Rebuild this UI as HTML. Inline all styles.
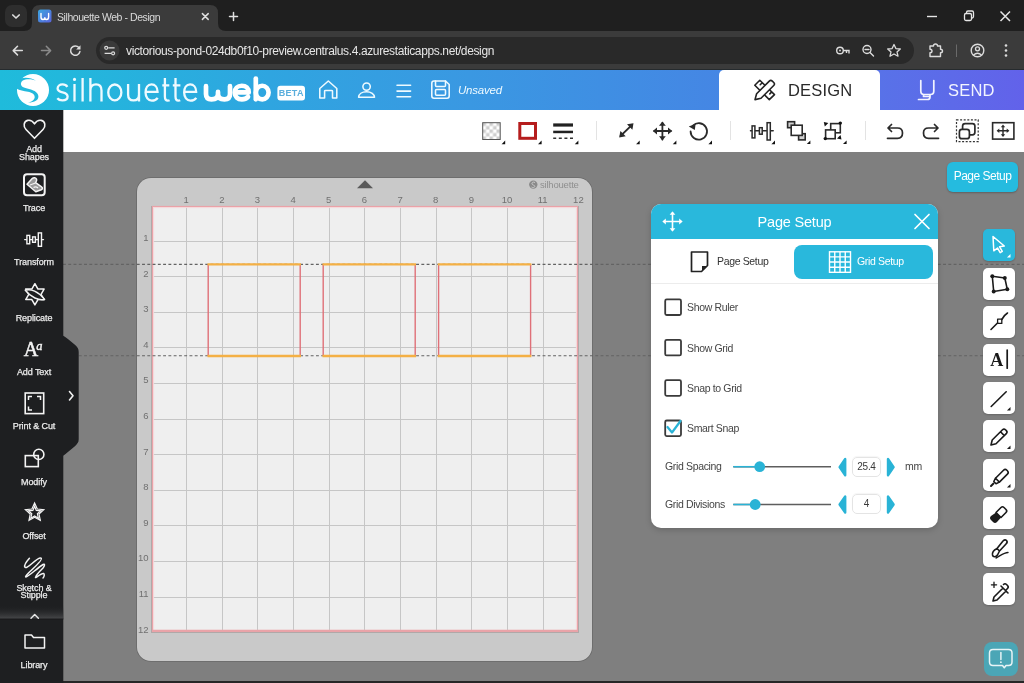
<!DOCTYPE html>
<html><head><meta charset="utf-8">
<style>
*{box-sizing:border-box;margin:0;padding:0}
html,body{width:1024px;height:683px;overflow:hidden;background:#7f7f7f;font-family:"Liberation Sans",sans-serif}
.a{position:absolute;will-change:transform}
svg{position:absolute;overflow:visible;will-change:transform}
#tabs{left:0;top:0;width:1024px;height:32px;background:#1f1f1f}
#addr{left:0;top:31px;width:1024px;height:39px;background:#3b3b3b}
#hdr{left:0;top:70px;width:1024px;height:40px;background:linear-gradient(90deg,#1fbbdb 0px,#22b8dc 60px,#2fa5e0 270px,#3a98e2 470px,#3f8fe3 600px,#4586e4 720px,#5872e8 880px,#6262ea 1024px)}
#tbar{left:63px;top:110px;width:961px;height:42px;background:#fff}
.sl{z-index:6;left:0;width:68px;text-align:center;font-size:9px;line-height:10px;color:#ececec;white-space:nowrap;letter-spacing:-0.1px;-webkit-text-stroke:0.25px #ececec;will-change:transform}
#mat{left:137px;top:177.5px;width:455px;height:483px;background:#c9c9c9;border-radius:14px;box-shadow:0 0 0 0.8px rgba(0,0,0,0.18)}
#grid{left:152px;top:206px;width:426px;height:426px;background:#efefef}
#dlg{left:651px;top:204px;width:287px;height:324px;background:#fff;border-radius:10px;overflow:hidden;box-shadow:0 2px 6px rgba(0,0,0,0.18)}
.ttl{left:57px;top:10.9px;font-size:10.5px;color:#dadada;white-space:nowrap;letter-spacing:-0.43px}
.url{left:125.5px;top:43.5px;font-size:12px;color:#e6e6e6;white-space:nowrap;letter-spacing:-0.374px}
.dl{left:36px;font-size:10.5px;color:#454545;letter-spacing:-0.35px;white-space:nowrap}
.tb{left:983px;width:32px;height:32px;background:#fff;border-radius:5px;box-shadow:0 1px 2px rgba(0,0,0,0.2)}
.tb.on{background:#29b8dc}
</style></head><body>
<!-- browser chrome -->
<div id="tabs" class="a"></div>
<div id="addr" class="a"></div>
<div class="a" style="left:0;top:68.6px;width:1024px;height:1.4px;background:#262b2e"></div>
<div class="a" style="left:5px;top:5px;width:22px;height:22px;border-radius:7px;background:#2e2e2e"></div>
<svg style="left:0;top:0" width="1024" height="69">
  <path d="M12.8 15 L16 18 L19.2 15" fill="none" stroke="#ddd" stroke-width="1.7" stroke-linecap="round" stroke-linejoin="round"/>
  <!-- active tab -->
  <path d="M24 31 Q32 31 32 23 L32 13 Q32 5 40 5 L210 5 Q218 5 218 13 L218 23 Q218 31 226 31 Z" fill="#3b3b3b"/>
  <!-- tab close -->
  <path d="M202.4 13.6 L208.2 19.4 M208.2 13.6 L202.4 19.4" stroke="#dedede" stroke-width="1.5" stroke-linecap="round"/>
  <!-- plus -->
  <path d="M233.5 12.5 V20.5 M229.5 16.5 H237.5" stroke="#e0e0e0" stroke-width="1.5" stroke-linecap="round"/>
  <!-- window controls -->
  <path d="M927 16.5 H937" stroke="#e6e6e6" stroke-width="1.4"/>
  <rect x="964.5" y="13.5" width="7" height="7" rx="1.5" fill="none" stroke="#e6e6e6" stroke-width="1.3"/>
  <path d="M966.5 13.5 V12.5 Q966.5 11 968 11 H972 Q973.5 11 973.5 12.5 V16.5 Q973.5 18 972 18" fill="none" stroke="#e6e6e6" stroke-width="1.3"/>
  <path d="M1000.5 11.5 L1010 21 M1010 11.5 L1000.5 21" stroke="#e6e6e6" stroke-width="1.5"/>
  <!-- nav -->
  <path d="M22.3 50.6 H13.3 M17.5 46.3 L13.2 50.6 L17.5 54.9" fill="none" stroke="#dcdcdc" stroke-width="1.5" stroke-linecap="round" stroke-linejoin="round"/>
  <path d="M41.5 50.6 H50.5 M46.3 46.3 L50.6 50.6 L46.3 54.9" fill="none" stroke="#8a8a8a" stroke-width="1.5" stroke-linecap="round" stroke-linejoin="round"/>
  <path d="M78.9 47.6 A4.7 4.7 0 1 0 79.9 51.6" fill="none" stroke="#dcdcdc" stroke-width="1.5" stroke-linecap="round"/>
  <path d="M80.5 45.2 V49.6 H76.1 Z" fill="#dcdcdc"/>
  <!-- omnibox -->
  <rect x="96" y="37" width="818" height="27" rx="13.5" fill="#292929"/>
  <circle cx="109.5" cy="50.5" r="10" fill="#3a3a3a"/>
  <path d="M108.3 47.8 H114.6 M104.6 53.3 H111" stroke="#dcdcdc" stroke-width="1.3"/>
  <circle cx="106.2" cy="47.8" r="1.5" fill="none" stroke="#dcdcdc" stroke-width="1.2"/>
  <circle cx="113.1" cy="53.3" r="1.5" fill="none" stroke="#dcdcdc" stroke-width="1.2"/>
  <!-- key -->
  <circle cx="840" cy="50.5" r="3.3" fill="none" stroke="#dcdcdc" stroke-width="1.4"/>
  <circle cx="840" cy="50.5" r="0.9" fill="#dcdcdc"/>
  <path d="M843.3 50.5 H849 V53.5 M846.5 50.5 V53" fill="none" stroke="#dcdcdc" stroke-width="1.4"/>
  <!-- zoom -->
  <circle cx="867" cy="49.5" r="4" fill="none" stroke="#dcdcdc" stroke-width="1.4"/>
  <path d="M865 49.5 H869 M870 52.5 L873.5 56" stroke="#dcdcdc" stroke-width="1.4" stroke-linecap="round"/>
  <!-- star -->
  <path d="M894 44.5 L895.9 48.6 L900.3 49 L897 51.9 L898 56.2 L894 54 L890 56.2 L891 51.9 L887.7 49 L892.1 48.6 Z" fill="none" stroke="#dcdcdc" stroke-width="1.3" stroke-linejoin="round"/>
  <!-- extension -->
  <path d="M930 46 H933.5 Q933.5 44 935.5 44 Q937.5 44 937.5 46 H940.5 V49.2 Q942.5 49.2 942.5 51 Q942.5 52.8 940.5 52.8 V56.5 H930 V52.8 Q932 52.8 932 51 Q932 49.2 930 49.2 Z" fill="none" stroke="#dcdcdc" stroke-width="1.4" stroke-linejoin="round"/>
  <path d="M956.5 44.5 V57" stroke="#6a6a6a" stroke-width="1"/>
  <!-- profile -->
  <circle cx="977.5" cy="50.5" r="6.3" fill="none" stroke="#dcdcdc" stroke-width="1.4"/>
  <circle cx="977.5" cy="48.8" r="2" fill="none" stroke="#dcdcdc" stroke-width="1.3"/>
  <path d="M973.5 55 Q977.5 51.5 981.5 55" fill="none" stroke="#dcdcdc" stroke-width="1.3"/>
  <circle cx="1006" cy="45.5" r="1.3" fill="#dcdcdc"/><circle cx="1006" cy="50.5" r="1.3" fill="#dcdcdc"/><circle cx="1006" cy="55.5" r="1.3" fill="#dcdcdc"/>
  <!-- favicon -->
  <defs><linearGradient id="fav" x1="0" y1="0" x2="1" y2="1"><stop offset="0" stop-color="#3aa6df"/><stop offset="1" stop-color="#5b63dc"/></linearGradient></defs>
  <rect x="38" y="9.5" width="13.5" height="13" rx="2.5" fill="url(#fav)"/>
  <path d="M41 13.5 V17 Q41 19.5 43 19.5 Q44.8 19.5 44.8 17.3 Q44.8 19.5 46.6 19.5 Q48.6 19.5 48.6 17 V13.5" fill="none" stroke="#fff" stroke-width="1.4" stroke-linecap="round"/>
</svg>
<div class="a ttl">Silhouette Web - Design</div>
<div class="a url">victorious-pond-024db0f10-preview.centralus.4.azurestaticapps.net/design</div>

<div id="hdr" class="a"></div>
<svg style="left:0;top:0" width="1024" height="110">
  <circle cx="33" cy="90" r="16" fill="#fff"/>
  <path fill="#22b9dc" d="M36.2 80.9 C33 79 26 78.6 22.8 80.6 C20.6 82 20.5 84.5 21.6 86 C22.6 87.3 26 88.1 30 89.2 C34.5 90.5 38.4 92.6 38.4 96.6 C38.4 100.2 35 102.4 28 102.9 C32 101.6 34.7 99.6 34.7 97 C34.7 94.1 31.6 92.6 28 91.8 C24 90.9 19 90.2 16.9 88.7 L16.3 86 L17.5 81.5 L21 78.2 C26 77 32 77.8 36.2 80.9 Z"/>
  <g fill="none" stroke="#effaff" stroke-width="2.3" stroke-linecap="butt">
    <path d="M67.4 86.8 C66.3 85.2 64.6 84.45 62.6 84.45 C59.6 84.45 57.6 86.2 57.6 88.5 C57.6 91 59.8 91.7 62.6 92.3 C65.6 93 67.6 94 67.6 96.6 C67.6 99 65.4 100.45 62.4 100.45 C60.2 100.45 58.4 99.6 57.3 98.2"/>
    <path d="M74.5 84 V101.6 M82.6 78 V101.6 M90.4 78 V101.6 M90.4 90.5 C90.4 86.5 92.8 84.45 96 84.45 C99.4 84.45 101.5 86.8 101.5 90.5 V101.6"/>
    <ellipse cx="114.8" cy="92.45" rx="6.55" ry="7.95"/>
    <path d="M128.1 84 V94.5 C128.1 98.5 130.3 100.45 133.5 100.45 C136.8 100.45 139 98.5 139 94.5 M139 84 V101.6"/>
    <path d="M145.55 91.8 H157.55 C157.55 87.2 155 84.45 151.55 84.45 C147.8 84.45 145.55 87.8 145.55 92.5 C145.55 97.3 148.2 100.65 151.8 100.65 C154.5 100.65 156.5 99.5 157.7 97.8"/>
    <path d="M164.9 78 V96.5 C164.9 99.5 166 100.6 167.8 100.6 C168.6 100.6 169.2 100.5 169.6 100.3 M162.3 85.4 H169.3"/>
    <path d="M175.5 78 V96.5 C175.5 99.5 176.6 100.6 178.4 100.6 C179.2 100.6 179.8 100.5 180.2 100.3 M172.8 85.4 H180.4"/>
    <path d="M184.15 91.8 H196.15 C196.15 87.2 193.6 84.45 190.15 84.45 C186.4 84.45 184.15 87.8 184.15 92.5 C184.15 97.3 186.8 100.65 190.4 100.65 C193.1 100.65 195.1 99.5 196.3 97.8"/>
  </g>
  <circle cx="74.5" cy="79.4" r="1.55" fill="#effaff"/>
  <g fill="none" stroke="#fff" stroke-width="4.7" stroke-linecap="round" stroke-linejoin="round">
    <path d="M206 86.2 V94 C206 97.5 208 99.35 211.5 99.35 C215.5 99.35 218 97.5 218 94 V91.9 M218 94 C218 97.5 220.5 99.35 224.5 99.35 C228 99.35 230 97.5 230 94 V86.2"/>
    <path d="M234.75 92.4 H248.75 C248.75 88.3 245.9 85.75 241.75 85.75 C237.6 85.75 234.75 88.6 234.75 92.55 C234.75 96.6 237.6 99.35 241.9 99.35 C244.6 99.35 246.6 98.3 248 96.8"/>
    <path d="M255.8 78.6 V99.3"/>
    <ellipse cx="262.2" cy="92.55" rx="6.4" ry="6.8"/>
  </g>
  <rect x="277.4" y="85.8" width="27.6" height="14.7" rx="3" fill="#fff"/>
  <text x="291.2" y="96.2" text-anchor="middle" font-family="Liberation Sans" font-weight="bold" font-size="9" letter-spacing="0.3" fill="#5aaedc">BETA</text>
  <g fill="none" stroke="#eefaff" stroke-width="1.55" stroke-linejoin="round" stroke-linecap="round">
    <path d="M319.8 98 V88.5 L328.3 81 L336.8 88.5 V98 H332.5 V91 Q332.5 90.5 331.5 90.5 H325.5 Q324.6 90.5 324.6 91 V98 Z"/>
    <circle cx="366.6" cy="86.6" r="3.7"/>
    <path d="M358.6 97.3 C358.6 94 362 91.8 366.6 91.8 C371 91.8 374.5 94 374.5 97.3 Z"/>
    <path d="M397 85.3 H410.6 M397 91.1 H410.6 M397 96.8 H410.6"/>
    <path d="M434 81 H445.5 L449.2 84.5 V96 Q449.2 98.2 447 98.2 H434 Q431.8 98.2 431.8 96 V83.2 Q431.8 81 434 81 Z"/>
    <path d="M435.5 81 V85.5 Q435.5 86.5 436.5 86.5 H444.5 Q445.5 86.5 445.5 85.5 V81"/>
    <rect x="435.5" y="89.5" width="10" height="5.8" rx="1"/>
  </g>
</svg>
<div class="a" style="left:458px;top:83.5px;font-size:11.5px;font-style:italic;color:#eefaff;letter-spacing:-0.2px">Unsaved</div>
<div class="a" style="left:719px;top:69.5px;width:161px;height:41px;background:#fff;border-radius:5px 5px 0 0"></div>
<div class="a" style="left:788px;top:81px;font-size:16.5px;color:#2a2a2a;letter-spacing:0.2px">DESIGN</div>
<div class="a" style="left:948px;top:81px;font-size:16.5px;color:#f2f4ff;letter-spacing:0.2px">SEND</div>
<svg style="left:0;top:0" width="1024" height="110">
  <g fill="none" stroke="#222" stroke-width="1.6" stroke-linejoin="round" stroke-linecap="round">
    <path d="M754.8 85.3 L759.8 80.3 L774.5 94.6 L769.3 99.6 Z M762.2 82.7 L760.2 84.7 M771.8 91.9 L769.8 93.9" fill="#fff"/>
    <path d="M755 99.6 L756.6 93.8 L769.3 81.1 Q770.8 79.6 772.3 81.1 L773.7 82.5 Q775.2 84 773.7 85.5 L761 98.2 Z" fill="#fff"/>
  </g>
  <g fill="none" stroke="#f2f4ff" stroke-width="1.7" stroke-linecap="round" stroke-linejoin="round">
    <path d="M920.8 80.5 V91 Q920.8 94.5 924 94.5 H930.5 Q933.8 94.5 933.8 91 V80.5 M923.5 94.5 V96.5 H930 M930 94.5 V97 Q930 99.5 927.5 99.5 H918.5"/>
  </g>
</svg>
<div id="tbar" class="a"></div>
<svg style="left:0;top:0" width="1024" height="152">
  <defs>
    <pattern id="chk" x="482.5" y="122.5" width="7" height="7" patternUnits="userSpaceOnUse">
      <rect width="7" height="7" fill="#fff"/><rect width="3.5" height="3.5" fill="#cfcfcf"/><rect x="3.5" y="3.5" width="3.5" height="3.5" fill="#cfcfcf"/>
    </pattern>
  </defs>
  <rect x="482.7" y="122.7" width="17.5" height="16.8" fill="url(#chk)" stroke="#555" stroke-width="1"/>
  <rect x="519.8" y="123.5" width="15.7" height="14.8" fill="#fff" stroke="#b51d1d" stroke-width="3"/>
  <rect x="553.2" y="123.4" width="19.8" height="3.2" fill="#222"/>
  <rect x="553.2" y="130.7" width="19.8" height="2.5" fill="#222"/>
  <path d="M553.2 138.3 H573" stroke="#333" stroke-width="1.5" stroke-dasharray="3 2.6"/>
  <g fill="#111">
    <path d="M505.2 140.6 V144.2 H501.6 Z"/><path d="M541.6 140.6 V144.2 H538 Z"/><path d="M578.4 140.6 V144.2 H574.8 Z"/>
    <path d="M639.7 140.6 V144.2 H636.1 Z"/><path d="M676.4 140.6 V144.2 H672.8 Z"/><path d="M712 140.6 V144.2 H708.4 Z"/>
    <path d="M775 140.6 V144.2 H771.4 Z"/><path d="M810.4 140.4 V144 H806.8 Z"/><path d="M846.6 140.4 V144 H843 Z"/>
  </g>
  <g stroke="#e3e3e3" stroke-width="1"><path d="M596.5 121 V140"/><path d="M730.5 121 V140"/><path d="M865.5 121 V140"/></g>
  <g fill="none" stroke="#2a2a2a" stroke-width="1.8" stroke-linecap="round" stroke-linejoin="round">
    <path d="M620.5 136 L632 124.8"/>
    <path d="M662.4 123 V139.5 M654.3 131 H670.8"/>
    <path d="M693 125.6 A8.2 8.2 0 1 1 690.6 131.5"/>
    <path d="M750.5 130.7 H751.4 M755.4 130.7 H758.7 M762.7 130.7 H766.4 M770.8 130.7 H773.2" stroke-width="1.5"/>
  </g>
  <g fill="#2a2a2a">
    <path d="M633.5 123.2 L627 124.3 L632.4 129.7 Z"/><path d="M619.2 137.4 L620.4 130.9 L625.7 136.3 Z"/>
    <path d="M662.4 121.5 L659 125.8 H665.8 Z"/><path d="M662.4 140.6 L659 136.3 H665.8 Z"/>
    <path d="M652.8 131 L657 127.6 V134.4 Z"/><path d="M672.3 131 L668 127.6 V134.4 Z"/>
    <path d="M688.8 126.4 L695.6 123.7 L694.8 130 Z"/>
  </g>
  <g fill="#fff" stroke="#2a2a2a" stroke-width="1.5">
    <rect x="752.1" y="125.9" width="2.8" height="12"/>
    <rect x="759.4" y="127.7" width="2.8" height="6.5"/>
    <rect x="767.1" y="122.7" width="3.2" height="17.3"/>
  </g>
  <g stroke="#2a2a2a" stroke-width="1.6">
    <rect x="787.6" y="121.7" width="7" height="6" fill="#cfcfcf"/>
    <rect x="798.6" y="133.7" width="6.6" height="6.2" fill="#cfcfcf"/>
    <rect x="791.2" y="125.2" width="11" height="10.2" fill="#fff"/>
  </g>
  <g stroke="#2a2a2a" stroke-width="1.6">
    <rect x="830.7" y="123.6" width="9.6" height="9.2" fill="#fff"/>
    <rect x="825.6" y="129.9" width="9.6" height="8.8" fill="#fff"/>
  </g>
  <g fill="#111"><path d="M823.8 122 L828.3 123 L824.8 126.5 Z"/><circle cx="840.3" cy="123.1" r="1.7"/><circle cx="825.3" cy="138.6" r="1.7"/><path d="M841.5 139.6 L837 138.6 L840.5 135.1 Z"/></g>
  <g fill="none" stroke="#2a2a2a" stroke-width="1.7" stroke-linecap="round" stroke-linejoin="round">
    <path d="M891.5 124.5 L888 128 L891.5 131.5 M888.5 128 H897.5 Q902.5 128 902.5 133 Q902.5 138.3 897.5 138.3 H887.5"/>
    <path d="M934.5 124.5 L938 128 L934.5 131.5 M937.5 128 H928.5 Q923.5 128 923.5 133 Q923.5 138.3 928.5 138.3 H938.5"/>
    <rect x="962.6" y="123.6" width="12.3" height="11.2" rx="2.5"/>
    <rect x="959.4" y="129.4" width="10" height="9.3" rx="2.5" fill="#fff"/>
  </g>
  <rect x="956.5" y="119.8" width="21.7" height="21.8" fill="none" stroke="#333" stroke-width="1.2" stroke-dasharray="2 1.6"/>
  <rect x="992.6" y="122.7" width="21.3" height="16.4" fill="none" stroke="#2a2a2a" stroke-width="1.6"/>
  <g fill="none" stroke="#2a2a2a" stroke-width="1.4"><path d="M1003 126 V135.5 M997.8 130.7 H1008.2"/></g>
  <g fill="#2a2a2a">
    <path d="M1003 124.6 L1000.8 127.3 H1005.2 Z"/><path d="M1003 136.9 L1000.8 134.2 H1005.2 Z"/>
    <path d="M996.6 130.7 L999.3 128.5 V132.9 Z"/><path d="M1009.4 130.7 L1006.7 128.5 V132.9 Z"/>
  </g>
</svg>
<div id="side" class="a"></div>
<svg style="left:0;top:0;z-index:5" width="90" height="683">
  <path d="M0 110 H63.3 V335.8 C66 337.5 70 340.5 74.6 344.6 C77.5 347.3 78.7 349 78.7 352 V439.3 C78.7 442.5 77.3 444 74.6 446.5 C70 450.5 66 453.5 63.3 455.7 V683 H0 Z" fill="#1e1f21"/>
  <path d="M0 605 H63.3 V619 H0 Z" fill="url(#sep)"/><path d="M0 619 H63.3" stroke="#18191b" stroke-width="1"/>
  <defs><linearGradient id="sep" x1="0" y1="0" x2="0" y2="1"><stop offset="0" stop-color="#1e1f21" stop-opacity="0"/><stop offset="1" stop-color="#48494b"/></linearGradient></defs>
  <path d="M31 618.3 L34.7 614.4 L38.4 618.3" fill="none" stroke="#e8e8e8" stroke-width="1.4" stroke-linecap="round" stroke-linejoin="round"/>
  <path d="M69.5 391.5 L73 395.7 L69.5 400" fill="none" stroke="#f0f0f0" stroke-width="1.6" stroke-linecap="round" stroke-linejoin="round"/>
  <g fill="none" stroke="#f4f4f4" stroke-width="1.6" stroke-linejoin="round" stroke-linecap="round">
    <path d="M34.5 138.3 L26 129.5 C23 126.3 23.6 121.2 27.8 120.4 C30.8 119.8 33 121.6 34.5 123.8 C36 121.6 38.2 119.8 41.2 120.4 C45.4 121.2 46 126.3 43 129.5 Z"/>
    <rect x="24" y="174.2" width="20.7" height="21" rx="3" stroke-width="2"/>
    <path d="M24.7 239.6 H43.5" stroke-width="1.4"/>
  </g>
  <path d="M27 184.3 L32.2 178.6 C33.6 177.1 36 177.4 36.6 179.2 C37 180.4 36.3 181.6 35.6 182.6 L41.6 186.8 C42.8 187.6 42.6 189.2 41.3 189.8 L35.8 191.8 Z" fill="#9a9a9a" stroke="#f4f4f4" stroke-width="1.5" stroke-linejoin="round"/>
  <path d="M30 185 L35.5 183 M33.5 187.5 C35 186.5 37 187 38 188" fill="none" stroke="#f4f4f4" stroke-width="1.2"/>
  <g fill="#1e1f21" stroke="#f4f4f4" stroke-width="1.4">
    <rect x="26.9" y="235.4" width="2.8" height="8.4"/>
    <rect x="32.6" y="236.9" width="2.8" height="5.4"/>
    <rect x="38.3" y="232.9" width="3.2" height="13.4"/>
  </g>
  <g fill="none" stroke="#f4f4f4" stroke-width="1.5" stroke-linejoin="round" stroke-linecap="round">
    <path d="M34.90 283.70 L37.96 289.00 L44.08 289.00 L41.02 294.30 L44.08 299.60 L37.96 299.60 L34.90 304.90 L31.84 299.60 L25.72 299.60 L28.78 294.30 L25.72 289.00 L31.84 289.00 Z"/>
    <path d="M25.3 290.2 C30.5 288.3 38.5 291.5 44.6 299.4 C39 300.8 30.8 297.3 25.3 290.2 Z" fill="#1e1f21"/>
  </g>
  <text x="23.8" y="356.3" font-family="Liberation Serif" font-size="20" fill="#f4f4f4" stroke="#f4f4f4" stroke-width="0.5">A</text>
  <text x="36.3" y="350" font-family="Liberation Serif" font-style="italic" font-size="12.5" fill="#f4f4f4" stroke="#f4f4f4" stroke-width="0.4">a</text>
  <g fill="none" stroke="#f4f4f4" stroke-width="1.6">
    <rect x="25.2" y="393" width="18.5" height="20.6"/>
    <path d="M28.5 400 V396.5 H32 M37 396.5 H40.5 V400 M28.5 406.5 V410 H32" stroke-width="1.5"/>
    <rect x="25.3" y="455.6" width="13" height="11"/>
    <circle cx="38.8" cy="454.4" r="5.1"/>
    <path d="M34.6 503 L37.3 509 L43.8 509.6 L39 514 L40.3 520.4 L34.6 517.2 L29 520.4 L30.2 514 L25.4 509.6 L31.9 509 Z" stroke-width="1.2"/>
    <path d="M34.6 506.2 L36.3 510.4 L40.8 510.8 L37.4 513.8 L38.4 518.2 L34.6 516 L30.8 518.2 L31.8 513.8 L28.4 510.8 L32.9 510.4 Z" stroke-width="1.2"/>
    <path d="M29.4 558.3 C27 561 24 565 24.8 567 C25.5 568.5 28 567 32 563.5 C36 560 40 557 41.3 558.3 C42.5 559.8 35 567 29 572.5 C26 575.5 25 577 26 577 C28 577 38 567.5 43 564.5 C45 563.5 45 565.5 43 568 C40 571 35.5 576.5 35.5 577.5 C35.5 578.5 41 573 43.5 573.5 C45 574 44 577 43 578" stroke-width="1.5" stroke-linecap="round" stroke-linejoin="round"/>
    <path d="M25 635 H31.5 L33.5 637.5 H44.5 V648 H25 Z" stroke-width="1.5" stroke-linejoin="round"/>
  </g>
</svg>
<div class="a sl" style="top:143.5px">Add</div>
<div class="a sl" style="top:151.5px">Shapes</div>
<div class="a sl" style="top:202.5px">Trace</div>
<div class="a sl" style="top:257px">Transform</div>
<div class="a sl" style="top:312.5px">Replicate</div>
<div class="a sl" style="top:367px">Add Text</div>
<div class="a sl" style="top:421px">Print &amp; Cut</div>
<div class="a sl" style="top:476.5px">Modify</div>
<div class="a sl" style="top:531px">Offset</div>
<div class="a sl" style="top:582.5px">Sketch &amp;</div>
<div class="a sl" style="top:590px">Stipple</div>
<div class="a sl" style="top:659.5px">Library</div>
<div id="mat" class="a"></div>
<svg style="left:0;top:0" width="1024" height="683">
  <rect x="152" y="206" width="426.5" height="426.5" fill="#efefef"/>
  <g stroke="#c6c6c6" stroke-width="1"><path d="M186.5 206 V633"/><path d="M152 241.5 H579"/><path d="M222.5 206 V633"/><path d="M152 276.5 H579"/><path d="M257.5 206 V633"/><path d="M152 312.5 H579"/><path d="M293.5 206 V633"/><path d="M152 347.5 H579"/><path d="M329.5 206 V633"/><path d="M152 383.5 H579"/><path d="M364.5 206 V633"/><path d="M152 419.5 H579"/><path d="M400.5 206 V633"/><path d="M152 454.5 H579"/><path d="M436.5 206 V633"/><path d="M152 490.5 H579"/><path d="M471.5 206 V633"/><path d="M152 525.5 H579"/><path d="M507.5 206 V633"/><path d="M152 561.5 H579"/><path d="M543.5 206 V633"/><path d="M152 597.5 H579"/><path d="M578.5 206 V633"/><path d="M152 632.5 H579"/></g>
  <rect x="152.5" y="206.5" width="425" height="425" fill="none" stroke="#eaa2a8" stroke-width="1.2"/>
  <rect x="153.6" y="207.6" width="422.8" height="422.8" fill="none" stroke="#f6d8da" stroke-width="1"/>
  <path d="M152.5 630.8 H578" stroke="#e9a3a8" stroke-width="2"/>
  <path d="M578.5 206 V633 M152 632.5 H579 M151.5 206 V633" stroke="#b0a8a8" stroke-width="1"/>
  <g font-family="Liberation Sans" font-size="9.5" fill="#707070"><text x="186.1" y="202.8" text-anchor="middle">1</text><text x="148.5" y="240.9" text-anchor="end">1</text><text x="221.8" y="202.8" text-anchor="middle">2</text><text x="148.5" y="276.5" text-anchor="end">2</text><text x="257.4" y="202.8" text-anchor="middle">3</text><text x="148.5" y="312.1" text-anchor="end">3</text><text x="293.1" y="202.8" text-anchor="middle">4</text><text x="148.5" y="347.7" text-anchor="end">4</text><text x="328.7" y="202.8" text-anchor="middle">5</text><text x="148.5" y="383.3" text-anchor="end">5</text><text x="364.4" y="202.8" text-anchor="middle">6</text><text x="148.5" y="418.9" text-anchor="end">6</text><text x="400.1" y="202.8" text-anchor="middle">7</text><text x="148.5" y="454.5" text-anchor="end">7</text><text x="435.7" y="202.8" text-anchor="middle">8</text><text x="148.5" y="490.1" text-anchor="end">8</text><text x="471.4" y="202.8" text-anchor="middle">9</text><text x="148.5" y="525.7" text-anchor="end">9</text><text x="507.0" y="202.8" text-anchor="middle">10</text><text x="148.5" y="561.3" text-anchor="end">10</text><text x="542.7" y="202.8" text-anchor="middle">11</text><text x="148.5" y="596.9" text-anchor="end">11</text><text x="578.4" y="202.8" text-anchor="middle">12</text><text x="148.5" y="632.5" text-anchor="end">12</text></g>
  <path d="M357 188.3 L365 180.3 L373 188.3 Z" fill="#5a5a5a"/>
  <circle cx="533.3" cy="184.6" r="4.2" fill="#8a8a8a"/>
  <path d="M535 182.5 C533 181.5 531.5 182.5 532 184 C532.5 185.5 535 185 534.8 186.5 C534.5 187.8 532.8 187.8 531.5 187" fill="none" stroke="#c9c9c9" stroke-width="1"/>
  <text x="540" y="187.8" font-family="Liberation Sans" font-size="9.5" fill="#8f8f8f" letter-spacing="-0.2">silhouette</text>
  <g stroke="#636363" stroke-width="1.1" stroke-dasharray="2.9 2.37">
    <path d="M63 264.4 H1024"/><path d="M63 355.8 H1024"/>
  </g>
  <g fill="none">
    <g stroke="#df7078" stroke-width="1.4">
      <path d="M208.2 264.4 V356"/><path d="M300.2 264.4 V356"/>
      <path d="M323.2 264.4 V356"/><path d="M415.2 264.4 V356"/>
      <path d="M438.6 264.4 V356"/><path d="M530.6 264.4 V356"/>
    </g>
    <g stroke="#f4b045" stroke-width="2.3">
      <path d="M207.5 264.4 H301"/><path d="M207.5 356 H301"/>
      <path d="M322.5 264.4 H416"/><path d="M322.5 356 H416"/>
      <path d="M437.8 264.4 H531.4"/><path d="M437.8 356 H531.4"/>
    </g>
  </g>
</svg>
<div id="dlg" class="a">
  <div class="a" style="left:0;top:0;width:287px;height:35px;background:#29b8dc"></div>
  <div class="a" style="left:0;top:9.5px;width:287px;text-align:center;font-size:14.5px;color:#fff;letter-spacing:-0.2px">Page Setup</div>
  <div class="a" style="left:143px;top:41px;width:139px;height:34px;background:#29b8dc;border-radius:8px"></div>
  <div class="a" style="left:65.5px;top:51px;font-size:10.5px;color:#333;letter-spacing:-0.35px">Page Setup</div>
  <div class="a" style="left:205.5px;top:51px;font-size:10.5px;color:#fff;letter-spacing:-0.35px">Grid Setup</div>
  <div class="a" style="left:0;top:79px;width:287px;height:1px;background:#ececec"></div>
  <div class="a dl" style="top:97px">Show Ruler</div>
  <div class="a dl" style="top:137.5px">Show Grid</div>
  <div class="a dl" style="top:178px">Snap to Grid</div>
  <div class="a dl" style="top:218px">Smart Snap</div>
  <div class="a dl" style="left:14px;top:256px">Grid Spacing</div>
  <div class="a dl" style="left:14px;top:293.5px">Grid Divisions</div>
  <div class="a dl" style="left:253.5px;top:256px">mm</div>
  <div class="a" style="left:201px;top:252.5px;width:29px;height:20px;border:1px solid #e4e4e4;border-radius:5px;box-shadow:0 -1px 1px rgba(0,0,0,0.04);font-size:10px;color:#3a3a3a;text-align:center;line-height:18px;letter-spacing:-0.3px">25.4</div>
  <div class="a" style="left:201px;top:290px;width:29px;height:20px;border:1px solid #e4e4e4;border-radius:5px;box-shadow:0 -1px 1px rgba(0,0,0,0.04);font-size:10px;color:#3a3a3a;text-align:center;line-height:18px">4</div>
</div>
<svg style="left:0;top:0" width="1024" height="683">
  <g fill="none" stroke="#fff" stroke-width="1.6" stroke-linecap="round">
    <path d="M672.5 212.5 V230.5 M663.5 221.5 H681.5"/>
    <path d="M915 214.5 L929 228.5 M929 214.5 L915 228.5" stroke-width="1.7"/>
  </g>
  <g fill="#fff">
    <path d="M672.5 211.5 L669.6 214.8 H675.4 Z"/><path d="M672.5 231.5 L669.6 228.2 H675.4 Z"/>
    <path d="M662.5 221.5 L665.8 218.6 V224.4 Z"/><path d="M682.5 221.5 L679.2 218.6 V224.4 Z"/>
  </g>
  <g fill="none" stroke="#222" stroke-width="1.7" stroke-linejoin="round">
    <path d="M691.5 252 H707.5 V265.5 L701.5 271.5 H691.5 Z"/>
  </g>
  <path d="M702 271 V266 H707 Z" fill="#222"/>
  <g fill="none" stroke="#fff" stroke-width="1.4">
    <rect x="829.5" y="251.8" width="21" height="20.5"/>
    <path d="M834.75 251.8 V272.3 M840 251.8 V272.3 M845.25 251.8 V272.3 M829.5 256.9 H850.5 M829.5 262 H850.5 M829.5 267.2 H850.5"/>
  </g>
  <g fill="none" stroke="#3a3a3a" stroke-width="1.8">
    <rect x="665.2" y="299.4" width="15.8" height="15.6" rx="1.5"/>
    <rect x="665.2" y="339.8" width="15.8" height="15.6" rx="1.5"/>
    <rect x="665.2" y="380.2" width="15.8" height="15.6" rx="1.5"/>
    <rect x="665.2" y="420.5" width="15.8" height="15.6" rx="1.5"/>
  </g>
  <path d="M667.5 427 L672 432.5 L680.5 421" fill="none" stroke="#29b3d6" stroke-width="2.2" stroke-linecap="round" stroke-linejoin="round"/>
  <g stroke-width="1.5">
    <path d="M733.3 466.7 H831" stroke="#5e5e5e"/><path d="M733.3 466.7 H759.7" stroke="#29b3d6"/>
    <path d="M733.3 504.5 H831" stroke="#5e5e5e"/><path d="M733.3 504.5 H755.2" stroke="#29b3d6"/>
  </g>
  <g fill="#29b3d6">
    <circle cx="759.7" cy="466.7" r="5.4"/><circle cx="755.2" cy="504.5" r="5.4"/>
    <path d="M845.2 459 V475.2 L839.6 467.1 Z" stroke="#29b3d6" stroke-width="2.4" stroke-linejoin="round"/>
    <path d="M888 459 V475.2 L893.6 467.1 Z" stroke="#29b3d6" stroke-width="2.4" stroke-linejoin="round"/>
    <path d="M845.2 496.5 V512.6 L839.6 504.5 Z" stroke="#29b3d6" stroke-width="2.4" stroke-linejoin="round"/>
    <path d="M888 496.5 V512.6 L893.6 504.5 Z" stroke="#29b3d6" stroke-width="2.4" stroke-linejoin="round"/>
  </g>
</svg>
<div class="a" style="left:947px;top:161.5px;width:71px;height:29.5px;background:#25bbdf;border-radius:6px;box-shadow:0 1px 2px rgba(0,0,0,0.25)"></div>
<div class="a" style="left:947px;top:169.2px;width:71px;text-align:center;font-size:12px;color:#fff;letter-spacing:-0.5px">Page Setup</div>
<div class="a tb on" style="top:229.3px"></div><div class="a tb" style="top:267.5px"></div><div class="a tb" style="top:305.7px"></div><div class="a tb" style="top:343.9px"></div><div class="a tb" style="top:382.1px"></div><div class="a tb" style="top:420.3px"></div><div class="a tb" style="top:458.5px"></div><div class="a tb" style="top:496.7px"></div><div class="a tb" style="top:534.9px"></div><div class="a tb" style="top:573.1px"></div>
<div class="a" style="left:984px;top:641.6px;width:33.5px;height:34px;background:#4ba6b6;border-radius:8px"></div>
<div class="a" style="left:0;top:681px;width:1024px;height:2px;background:#262626"></div>
<svg style="left:0;top:0" width="1024" height="683">
  <g fill="none" stroke="#fff" stroke-width="1.5" stroke-linejoin="round">
    <path d="M993 236.5 L1004.3 246 L999.6 246.8 L1002.3 251.4 L1000.2 252.6 L997.5 248 L993.8 250.8 Z"/>
  </g>
  <path d="M1010.5 254 V257.6 H1006.9 Z" fill="#fff"/>
  <g fill="none" stroke="#1a1a1a" stroke-width="1.6" stroke-linejoin="round" stroke-linecap="round">
    <path d="M992.3 276.3 L1004.8 278 L1007.3 289.3 L993.7 291.5 Z"/>
    <path d="M991 329.5 L997.5 323 M1001.8 319.5 C1003.5 316.5 1005 314.5 1007.5 313"/>
    <rect x="997.6" y="319.2" width="4.2" height="4.2" stroke-width="1.3"/>
    <path d="M1007.2 350 V368.2" stroke-width="1.7"/>
    <path d="M991.2 406.5 L1006.2 391.8"/>
    <path d="M991 445 L992.2 440 L1002.5 429.8 Q1004 428.3 1005.5 429.8 L1006.3 430.6 Q1007.8 432.1 1006.3 433.6 L996 443.8 Z M1000.5 431.8 L1004.3 435.6"/>
    <path d="M995.5 478.2 L1003.5 470.2 Q1005.2 468.5 1006.9 470.2 L1007.4 470.7 Q1009.1 472.4 1007.4 474.1 L999.4 482.1 Z M995.5 478.2 L993.8 481.5 L996 483.7 L999.4 482.1"/>
    <path d="M991 486 L993.5 483.5" stroke-width="2"/>
    <path d="M991.4 584.8 H996.6 M994 582.2 V587.4" stroke-width="1.3"/>
    <path d="M993 601 L994 597 L1003 588 L1006 591 L997 600 Z M1001 586 L1008 593 M1003.5 584.5 Q1005 583 1006.5 584.5 L1007.5 585.5 Q1009 587 1007.5 588.5 L1006 590"/>
    <path d="M1003 541 Q1005 539 1006.5 540.5 Q1008 542 1006 544 L999.5 551 L997 548.5 Z M997 548.5 C994 550 992 552 992.5 555 C993 557.5 996 557 997.5 555 L999.5 551"/>
    <path d="M996 558 C1000 556 1004 552.5 1008 552.5" stroke-width="1.4"/>
  </g>
  <text x="990.3" y="366.3" font-family="Liberation Serif" font-weight="bold" font-size="18" fill="#1a1a1a">A</text>
  <g fill="#1a1a1a">
    <circle cx="992.3" cy="276.3" r="2"/><circle cx="1004.8" cy="278" r="2"/><circle cx="1007.3" cy="289.3" r="2"/><circle cx="993.7" cy="291.5" r="2"/>
    <path d="M1010.5 407 V410.6 H1006.9 Z"/><path d="M1010.5 445.5 V449.1 H1006.9 Z"/><path d="M1010.5 484 V487.6 H1006.9 Z"/>
    <path d="M996 512.5 L1001 517.5 L997 522 Q995 524 993 522 L991 520 Q989 518 991 516 Z"/>
  </g>
  <path d="M996 512.5 L1001 507.5 Q1002.5 506 1004 507.5 L1006 509.5 Q1007.5 511 1006 512.5 L1001 517.5 Z" fill="none" stroke="#1a1a1a" stroke-width="1.6" stroke-linejoin="round"/>
  <g fill="none" stroke="#e8f4f6" stroke-width="1.5" stroke-linejoin="round">
    <path d="M993 649.5 H1008.5 Q1012 649.5 1012 653 V662 Q1012 665.5 1008.5 665.5 H1006 L1004.3 667.8 L1002.5 665.5 H993 Q989.5 665.5 989.5 662 V653 Q989.5 649.5 993 649.5 Z"/>
    <path d="M1000.9 652.5 V659.5" stroke-linecap="round"/>
  </g>
  <circle cx="1000.9" cy="662.2" r="0.9" fill="#e8f4f6"/>
</svg>
</body></html>
